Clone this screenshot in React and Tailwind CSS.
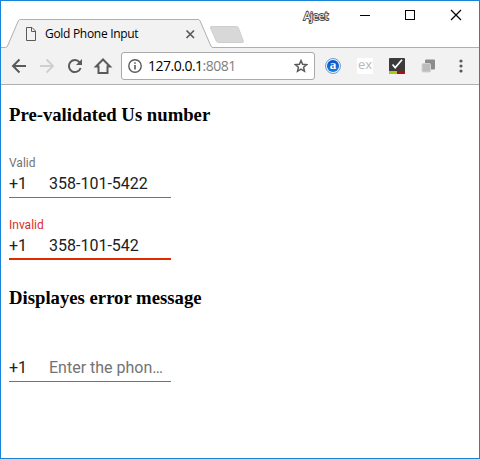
function TitleBar() {
  return (
    <div className="relative flex h-[47px] shrink-0">
      <svg className="absolute left-0 top-0" width="478" height="47" viewBox="1 1 478 47" aria-hidden="true">
        <path d="M1 47.5H6L7.3 46L18.4 20.7Q19.1 19.5 20.5 19.5H198Q199.4 19.5 200 20.8L210.9 46Q211.6 47.5 213 47.5H479V48H1Z" fill="#f2f2f2" />
        <path d="M1 47.5H5.5Q7 47.3 7.5 46L18.4 20.7Q19.1 19.5 20.5 19.5H198Q199.4 19.5 200 20.8L210.9 46Q211.6 47.5 213 47.5H479" fill="none" stroke="#afafaf" />
        <path d="M211.3 26.5H236.5Q237.8 26.5 238.3 27.7L243.3 41Q243.8 42.5 242.3 42.5H218.5Q217 42.5 216.4 41.2L210.5 28Q210 26.5 211.3 26.5Z" fill="#d8d8d8" stroke="#cecece" />
      </svg>
      <div className="relative mt-[19px] flex h-[28px] w-[211px] items-center pl-[24px]">
        <svg width="12" height="14" viewBox="0 0 12 14" fill="none" stroke="#5a5a5a" className="shrink-0">
          <path d="M1.5 .5H7L10.5 4V13.5H1.5ZM6.5 .5V4.5H10.5" />
        </svg>
        <span className="ml-[8px] w-[132px] whitespace-nowrap font-['Open_Sans',sans-serif] text-[12px] leading-[16px] tracking-[-0.3px] text-black">Gold Phone Input</span>
        <svg width="28" height="10" viewBox="0 0 28 10" fill="none" stroke="#5a5a5a" strokeWidth="1.7" className="shrink-0">
          <path d="M9.5 1.5L17 9M17 1.5L9.5 9" />
        </svg>
      </div>
      <div className="relative flex flex-1 justify-end">
        <span className="mr-[32px] mt-[7px] font-['Open_Sans',sans-serif] text-[11px] font-normal leading-[15px] tracking-[-0.35px] text-white [-webkit-text-stroke:1.8px_#4a4a4a] [paint-order:stroke_fill]">Ajeet</span>
        <svg width="119" height="30" viewBox="360 1 119 30" fill="none" stroke="black" shapeRendering="crispEdges">
          <path d="M360 15.5H370M405.5 10.5H414.5V19.5H405.5Z" />
          <path d="M451 10L461 20M461 10L451 20" shapeRendering="auto" strokeWidth="1.2" />
        </svg>
      </div>
    </div>
  );
}

function NavIcons() {
  return (
    <svg width="120" height="36" viewBox="1 48 120 36" className="shrink-0" fill="none" stroke="#5a5a5a" strokeWidth="2">
      <path d="M26 66H13.5M19.5 59.5L13 66L19.5 72.5" />
      <path d="M40 66H52.5M46.5 59.5L53 66L46.5 72.5" stroke="#d0d0d0" />
      <path d="M79.6 62.3A6 6 0 1 0 80.6 68" />
      <path d="M82 59V65H76Z" fill="#5a5a5a" stroke="none" />
      <path d="M96 66.5L103 59.5L110 66.5H107.5V73H98.5V66.5Z" />
    </svg>
  );
}

function AddressBar() {
  return (
    <div className="flex h-[28px] w-[194px] shrink-0 items-center rounded-[3px] border border-[#a9a9a9] bg-white px-[6px]">
      <svg width="14" height="14" viewBox="0 0 14 14" fill="none" stroke="#5a5a5a" strokeWidth="1.4">
        <circle cx="7" cy="7" r="6.2" />
        <path d="M7 6V10.5M7 3.3V4.8" strokeWidth="1.6" />
      </svg>
      <span className="ml-[6px] flex-1 whitespace-nowrap font-['Open_Sans',sans-serif] text-[14px] leading-[20px] tracking-[-0.5px] text-black">
        127.0.0.1<span className="text-[#808080]">:8081</span>
      </span>
      <svg width="14" height="14" viewBox="0 0 14 14" fill="none" stroke="#5a5a5a" strokeWidth="1.5">
        <path d="M7 1.6L8.6 5.3L12.6 5.7L9.6 8.3L10.5 12.3L7 10.2L3.5 12.3L4.4 8.3L1.4 5.7L5.4 5.3Z" />
      </svg>
    </div>
  );
}

function Extensions() {
  return (
    <div className="flex flex-1 items-center pl-[10px]">
      <div className="flex size-[16px] items-center justify-center rounded-full border border-[#6f9fd6] bg-[#e6f1fb]">
        <div className="flex size-[12px] items-center justify-center rounded-full bg-linear-to-b from-[#0a4fc0] to-[#1480e4] font-['Liberation_Serif',serif] text-[13px] font-bold leading-none text-white">
          <span className="-mt-[3px]">a</span>
        </div>
      </div>
      <div className="ml-[16px] flex size-[16px] items-center justify-center bg-white font-['Open_Sans',sans-serif] text-[13px] leading-none text-[#b8b8b8]">
        <span className="-mt-[3px]">ex</span>
      </div>
      <svg className="ml-[16px]" width="16" height="16" viewBox="0 0 16 16">
        <rect width="16" height="16" rx="1" fill="#3b3b3b" />
        <path d="M0 13H8V16H1Q0 16 0 15Z" fill="#aacb19" />
        <path d="M8 13H16V15Q16 16 15 16H8Z" fill="#b30b12" />
        <path d="M3.5 6.5L6.2 9.6L13 1.8" fill="none" stroke="white" strokeWidth="1.7" />
      </svg>
      <svg className="ml-[16px]" width="15" height="14" viewBox="0 0 15 14">
        <rect x="4" y="0.5" width="10" height="10" rx="1" fill="#8c8c8c" />
        <rect x="1" y="4.5" width="8.5" height="8.5" rx="1" fill="#bcbcbc" stroke="#d2d2d2" />
      </svg>
      <svg className="ml-[23px]" width="4" height="14" viewBox="0 0 4 14" fill="#5a5a5a">
        <circle cx="2" cy="2" r="1.6" />
        <circle cx="2" cy="7" r="1.6" />
        <circle cx="2" cy="12" r="1.6" />
      </svg>
    </div>
  );
}

function PhoneField({ label, value, invalid, placeholder }) {
  return (
    <div className="w-[162px] font-['Roboto',sans-serif]">
      <div className={`h-[14px] text-[12px] leading-[14px] ${invalid ? "text-[#dd2c2c]" : "text-[#737373]"}`}>{label}</div>
      <div className={`flex h-[28px] pt-[2px] text-[16px] leading-[24px] ${invalid ? "border-b-2 border-[#dd2c00]" : "border-b border-[#737373]"}`}>
        <span className="w-[40px] text-[#212121]">+1</span>
        {value ? (
          <span className="text-[#212121]">{value}</span>
        ) : (
          <span className="text-[#737373]">{placeholder}</span>
        )}
      </div>
    </div>
  );
}

function Heading({ children }) {
  return <h3 className="h-[22px] whitespace-nowrap font-['Liberation_Serif',serif] text-[18.72px] font-bold leading-[22px] text-black">{children}</h3>;
}

export default function App() {
  return (
    <div className="flex h-[459px] w-[480px] flex-col overflow-hidden border border-[#1883d7] bg-white">
      <TitleBar />
      <div className="flex h-[37px] shrink-0 items-center border-b border-[#afafaf] bg-[#f2f2f2]">
        <NavIcons />
        <AddressBar />
        <Extensions />
      </div>
      <main className="flex flex-col pl-[8px] pt-[19px]">
        <Heading>Pre-validated Us number</Heading>
        <div className="mt-[30px] flex flex-col gap-[20px]">
          <PhoneField label="Valid" value="358-101-5422" />
          <PhoneField label="Invalid" value="358-101-542" invalid />
        </div>
        <div className="mt-[27px]">
          <Heading>Displayes error message</Heading>
        </div>
        <div className="mt-[31px]">
          <PhoneField placeholder="Enter the phon…" />
        </div>
      </main>
    </div>
  );
}
